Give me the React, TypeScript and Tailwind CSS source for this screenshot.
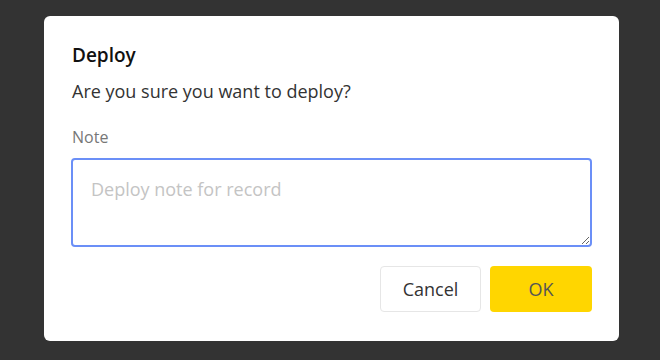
export default function App() {
  return (
    <div
      className="w-[660px] h-[360px] bg-[#333333] pl-[44px] pt-[16px]"
      style={{ fontFamily: '"Open Sans", "Noto Sans", sans-serif' }}
    >
      <div className="w-[575px] h-[325px] bg-white rounded-[6px] px-[27px] pt-[26px] flex flex-col">
        <h2 className="pl-px text-[19px] leading-[26px] font-semibold text-[#111]">Deploy</h2>
        <p className="pl-px mt-[10px] text-[18px] leading-[26px] text-[#333]">Are you sure you want to deploy?</p>
        <label className="pl-px mt-[22px] text-[16px] leading-[22px] text-[#777]">Note</label>
        <textarea
          placeholder="Deploy note for record"
          className="mt-[10px] w-full h-[89px] shrink-0 rounded-[4px] border-2 border-[#6b8ff7] px-[18px] pt-[17px] pb-[10px] text-[18px] leading-[24px] text-[#333] placeholder:text-[#c4c4c4] outline-none resize-y"
        />
        <div className="mt-[19px] flex justify-end gap-[9px]">
          <button className="w-[101px] h-[46px] rounded-[4px] border border-[#e6e6e6] bg-white text-[18px] text-[#333]">
            Cancel
          </button>
          <button className="w-[102px] h-[46px] rounded-[4px] bg-[#ffd600] text-[18px] text-[#555]">
            OK
          </button>
        </div>
      </div>
    </div>
  );
}
